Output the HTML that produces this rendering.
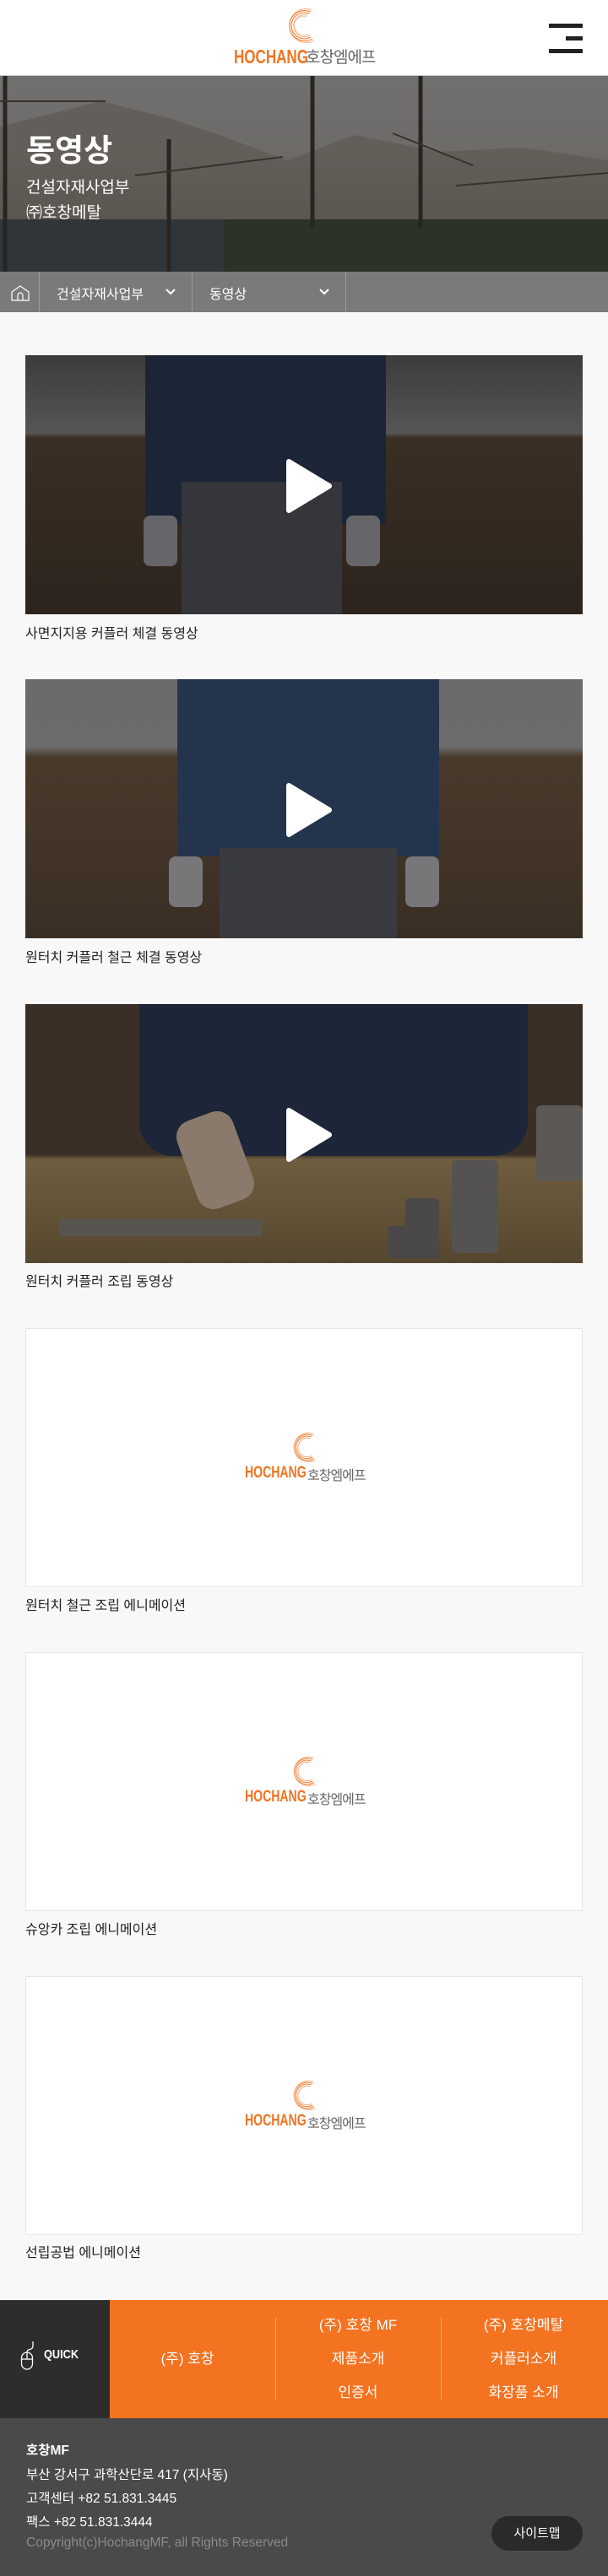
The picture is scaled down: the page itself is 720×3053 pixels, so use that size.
<!DOCTYPE html>
<html><head><meta charset="utf-8"><style>
*{margin:0;padding:0;box-sizing:border-box}
body{width:720px;height:3053px;background:#f8f8f8;font-family:"Liberation Sans","Noto Sans CJK KR",sans-serif;position:relative;overflow:hidden}
.abs{position:absolute}
header{position:absolute;left:0;top:0;width:720px;height:90px;background:#fff;border-bottom:1px solid #ccc}
.hero{left:0;top:90px;width:720px;height:232px;background:linear-gradient(180deg,#707070 0%,#6e6b67 40%,#5a5550 70%,#2f302b 100%);overflow:hidden}
.bc{left:0;top:322px;width:720px;height:48px;background:#7a7a7a;color:#fff;font-size:16px}
.bc .div{position:absolute;top:0;width:1px;height:48px;background:#999}
.vid{position:absolute;left:30px;width:660px;height:307px;overflow:hidden}
.cap{position:absolute;left:30px;font-size:16px;color:#222}
.play{position:absolute;left:50%;top:50%;margin-left:-22px;margin-top:-32px}
.ph{background:#fff;border:1px solid #e6e6e6}
.qk{left:0;top:2726px;width:130px;height:140px;background:#2d2d2d}
.or{left:130px;top:2726px;width:590px;height:140px;background:#f37321;color:#fff;font-size:17px}
.or div{position:absolute;text-align:center;width:180px}
.ft{left:0;top:2866px;width:720px;height:187px;background:#4a4a4a;color:#fff;font-size:15.5px}
.ft p{position:absolute;left:31px}
.hc{position:absolute;font-weight:bold;color:#f37321;transform:scaleX(.74);transform-origin:left;white-space:nowrap}
.kr{position:absolute;color:#666;letter-spacing:-1px;white-space:nowrap}
</style></head><body>
<header>
<svg class="abs" style="left:334px;top:8px" width="42" height="44" viewBox="0 0 42 44">
<g fill="none" stroke="#f37321" stroke-width="1">
<path d="M34 6A18 18 0 1 0 36 38"/><path d="M32 8A15.5 15.5 0 1 0 34 36"/><path d="M30 10A13 13 0 1 0 33 34" stroke="#f8a878"/><path d="M29 12A11 11 0 1 0 31 32" stroke="#fbc8a8"/><path d="M36 4A20 20 0 1 0 38 40" stroke="#f9b08a"/></g></svg>
<div class="hc" style="left:277px;top:54px;font-size:23px">HOCHANG</div>
<div class="kr" style="left:362px;top:53px;font-size:19px">호창엠에프</div>
<div class="abs" style="left:650px;top:28px;width:40px;height:5px;background:#222"></div>
<div class="abs" style="left:670px;top:43px;width:20px;height:5px;background:#222"></div>
<div class="abs" style="left:650px;top:58px;width:40px;height:5px;background:#222"></div>
</header>
<div class="abs hero">
<svg width="720" height="232" style="position:absolute;left:0;top:0">
<path d="M0 60 L120 30 L200 50 L260 70 L340 100 L420 70 L520 90 L620 85 L720 100 L720 232 L0 232Z" fill="#5e5852" opacity=".7"/>
<rect x="265" y="170" width="455" height="62" fill="#2b3226"/>
<rect x="0" y="170" width="265" height="62" fill="#303539"/>
<g stroke="#2a2420" stroke-width="5"><line x1="370" y1="0" x2="370" y2="180"/><line x1="498" y1="0" x2="498" y2="180"/><line x1="200" y1="75" x2="200" y2="232"/><line x1="6" y1="0" x2="6" y2="232"/></g>
<g stroke="#3a322c" stroke-width="2"><line x1="160" y1="118" x2="335" y2="96"/><line x1="0" y1="30" x2="125" y2="30"/><line x1="465" y1="68" x2="560" y2="106"/><line x1="540" y1="130" x2="720" y2="115"/></g>
</svg>
<div class="abs" style="left:31px;top:58px;font-size:37px;font-weight:bold;color:#fff">동영상</div>
<div class="abs" style="left:31px;top:117px;font-size:19px;color:#fff">건설자재사업부</div>
<div class="abs" style="left:31px;top:147px;font-size:19px;color:#fff">㈜호창메탈</div>
</div>
<div class="abs bc">
<svg class="abs" style="left:13px;top:16px" width="22" height="19" viewBox="0 0 22 19"><path d="M1 18V8L11 1L21 8V18Z" fill="none" stroke="#fff" stroke-width="1.2"/><path d="M8 18V12A3 3 0 0 1 14 12V18" fill="none" stroke="#fff" stroke-width="1.2"/></svg>
<div class="div" style="left:46px"></div><div class="div" style="left:227px"></div><div class="div" style="left:409px"></div>
<div class="abs" style="left:67px;top:13px">건설자재사업부</div>
<div class="abs" style="left:248px;top:13px">동영상</div>
<svg class="abs" style="left:196px;top:20px" width="12" height="8"><path d="M1 1L6 6L11 1" stroke="#fff" stroke-width="2" fill="none"/></svg>
<svg class="abs" style="left:378px;top:20px" width="12" height="8"><path d="M1 1L6 6L11 1" stroke="#fff" stroke-width="2" fill="none"/></svg>
</div>

<div class="vid" style="top:421px;background:linear-gradient(180deg,#3c3c3c 0,#555 30%,#3a2e24 32%,#2c241d 100%)">
<div class="abs" style="left:142px;top:0;width:285px;height:200px;background:#1c2536"></div>
<div class="abs" style="left:185px;top:150px;width:190px;height:157px;background:#35363b"></div>
<div class="abs" style="left:140px;top:190px;width:40px;height:60px;background:#66666a;border-radius:8px"></div>
<div class="abs" style="left:380px;top:190px;width:40px;height:60px;background:#66666a;border-radius:8px"></div>
<svg class="play" width="56" height="66"><path d="M4 4L52 33L4 62Z" fill="#fff" stroke="#fff" stroke-width="6" stroke-linejoin="round"/></svg></div>
<div class="cap" style="top:737px">사면지지용 커플러 체결 동영상</div>

<div class="vid" style="top:805px;background:linear-gradient(180deg,#6a6a6a 0,#6c6c6c 26%,#4a3a2c 30%,#3a2e24 100%)">
<div class="abs" style="left:180px;top:0;width:310px;height:210px;background:#25344d"></div>
<div class="abs" style="left:230px;top:200px;width:210px;height:107px;background:#3a3b40"></div>
<div class="abs" style="left:170px;top:210px;width:40px;height:60px;background:#77777a;border-radius:8px"></div>
<div class="abs" style="left:450px;top:210px;width:40px;height:60px;background:#77777a;border-radius:8px"></div>
<svg class="play" width="56" height="66"><path d="M4 4L52 33L4 62Z" fill="#fff" stroke="#fff" stroke-width="6" stroke-linejoin="round"/></svg></div>
<div class="cap" style="top:1121px">원터치 커플러 철근 체결 동영상</div>

<div class="vid" style="top:1190px;background:linear-gradient(180deg,#3a2f26 0,#3a2f26 58%,#6f5d3f 60%,#55472f 100%)">
<div class="abs" style="left:135px;top:0;width:460px;height:180px;background:#1c2638;border-radius:0 0 40px 40px"></div>
<div class="abs" style="left:190px;top:130px;width:70px;height:110px;background:#8a7a6c;border-radius:20px;transform:rotate(-20deg)"></div>
<div class="abs" style="left:430px;top:263px;width:60px;height:38px;background:#4a4848"></div>
<div class="abs" style="left:450px;top:230px;width:40px;height:60px;background:#4a4848;border-radius:6px"></div>
<div class="abs" style="left:505px;top:185px;width:55px;height:110px;background:#555252;border-radius:6px"></div>
<div class="abs" style="left:605px;top:120px;width:55px;height:90px;background:#5c5856;border-radius:6px"></div>
<div class="abs" style="left:40px;top:255px;width:240px;height:20px;background:#58544f"></div>
<svg class="play" width="56" height="66"><path d="M4 4L52 33L4 62Z" fill="#fff" stroke="#fff" stroke-width="6" stroke-linejoin="round"/></svg></div>
<div class="cap" style="top:1505px">원터치 커플러 조립 동영상</div>

<div class="vid ph" style="top:1574px">
<svg class="abs" style="left:310px;top:121px" width="36" height="38" viewBox="0 0 42 44"><g fill="none" stroke="#f37321" stroke-width="1.2"><path d="M34 6A18 18 0 1 0 36 38"/><path d="M32 8A15.5 15.5 0 1 0 34 36"/><path d="M30 10A13 13 0 1 0 33 34" stroke="#f8a878"/><path d="M36 4A20 20 0 1 0 38 40" stroke="#f9b08a"/></g></svg>
<div class="hc" style="left:259px;top:160px;font-size:19px">HOCHANG</div>
<div class="kr" style="left:333px;top:160px;font-size:16px">호창엠에프</div>
</div>
<div class="cap" style="top:1889px">원터치 철근 조립 에니메이션</div>
<div class="vid ph" style="top:1958px">
<svg class="abs" style="left:310px;top:121px" width="36" height="38" viewBox="0 0 42 44"><g fill="none" stroke="#f37321" stroke-width="1.2"><path d="M34 6A18 18 0 1 0 36 38"/><path d="M32 8A15.5 15.5 0 1 0 34 36"/><path d="M30 10A13 13 0 1 0 33 34" stroke="#f8a878"/><path d="M36 4A20 20 0 1 0 38 40" stroke="#f9b08a"/></g></svg>
<div class="hc" style="left:259px;top:160px;font-size:19px">HOCHANG</div>
<div class="kr" style="left:333px;top:160px;font-size:16px">호창엠에프</div>
</div>
<div class="cap" style="top:2273px">슈앙카 조립 에니메이션</div>
<div class="vid ph" style="top:2342px">
<svg class="abs" style="left:310px;top:121px" width="36" height="38" viewBox="0 0 42 44"><g fill="none" stroke="#f37321" stroke-width="1.2"><path d="M34 6A18 18 0 1 0 36 38"/><path d="M32 8A15.5 15.5 0 1 0 34 36"/><path d="M30 10A13 13 0 1 0 33 34" stroke="#f8a878"/><path d="M36 4A20 20 0 1 0 38 40" stroke="#f9b08a"/></g></svg>
<div class="hc" style="left:259px;top:160px;font-size:19px">HOCHANG</div>
<div class="kr" style="left:333px;top:160px;font-size:16px">호창엠에프</div>
</div>
<div class="cap" style="top:2656px">선립공법 에니메이션</div>

<div class="abs qk">
<svg class="abs" style="left:24px;top:48px" width="24" height="36" viewBox="0 0 24 36"><rect x="1.5" y="14" width="13" height="20" rx="6.5" fill="none" stroke="#fff" stroke-width="1.3"/><line x1="8" y1="14" x2="8" y2="22" stroke="#fff" stroke-width="1.3"/><line x1="1.5" y1="22" x2="14.5" y2="22" stroke="#fff" stroke-width="1.3"/><path d="M8 14C8 9 14 12 15 7V1" fill="none" stroke="#fff" stroke-width="1.3"/></svg>
<div class="abs" style="left:52px;top:56px;font-size:15px;font-weight:bold;color:#fff;transform:scaleX(.85);transform-origin:left">QUICK</div>
</div>
<div class="abs or">
<div style="left:2px;top:55px">(주) 호창</div>
<div class="abs" style="left:196px;top:21px;width:1px;height:98px;background:#f7a877"></div>
<div class="abs" style="left:392px;top:21px;width:1px;height:98px;background:#f7a877"></div>
<div style="left:204px;top:15px">(주) 호창 MF</div>
<div style="left:204px;top:55px">제품소개</div>
<div style="left:204px;top:95px">인증서</div>
<div style="left:400px;top:15px">(주) 호창메탈</div>
<div style="left:400px;top:55px">커플러소개</div>
<div style="left:400px;top:95px">화장품 소개</div>
</div>
<div class="abs ft">
<p style="top:26px;font-weight:bold">호창MF</p>
<p style="top:55px">부산 강서구 과학산단로 417 (지사동)</p>
<p style="top:83px">고객센터 +82 51.831.3445</p>
<p style="top:111px">팩스 +82 51.831.3444</p>
<p style="top:139px;color:#8a8a8a">Copyright(c)HochangMF, all Rights Reserved</p>
<div class="abs" style="left:582px;top:116px;width:108px;height:41px;background:#2a2a2a;border-radius:21px;text-align:center;line-height:41px;font-size:15px">사이트맵</div>
</div>
</body></html>
